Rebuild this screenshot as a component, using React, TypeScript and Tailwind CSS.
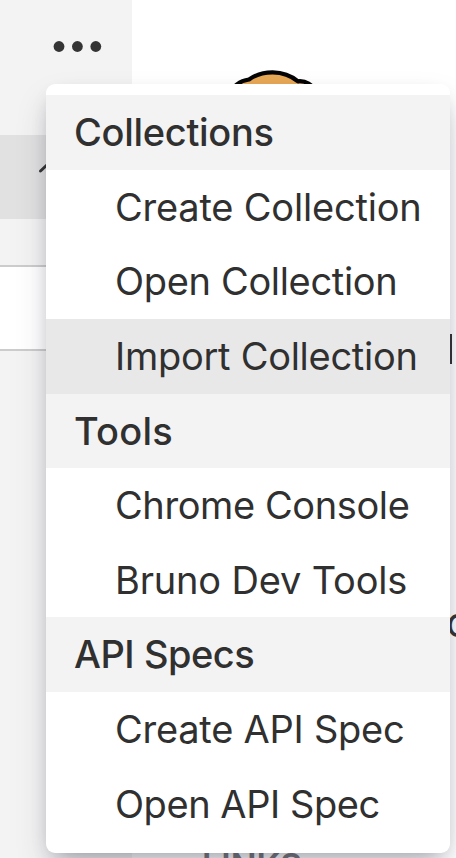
type Row = { label: string; tracking: string };
type Group = { title: Row; items: Row[] };

const groups: Group[] = [
  {
    title: { label: "Collections", tracking: "tracking-[-0.3px]" },
    items: [
      { label: "Create Collection", tracking: "tracking-[-0.2px]" },
      { label: "Open Collection", tracking: "tracking-[-0.33px]" },
      { label: "Import Collection", tracking: "tracking-[-0.27px]" },
    ],
  },
  {
    title: { label: "Tools", tracking: "tracking-[0.25px]" },
    items: [
      { label: "Chrome Console", tracking: "tracking-[-0.4px]" },
      { label: "Bruno Dev Tools", tracking: "tracking-[-0.18px]" },
    ],
  },
  {
    title: { label: "API Specs", tracking: "tracking-[-0.48px]" },
    items: [
      { label: "Create API Spec", tracking: "tracking-[-0.24px]" },
      { label: "Open API Spec", tracking: "tracking-[-0.45px]" },
    ],
  },
];

const active = "Import Collection";

function Sidebar() {
  return (
    <aside className="flex h-full w-[132px] shrink-0 flex-col bg-[#f3f3f3]">
      <div className="flex h-[135px] items-start justify-end pr-[30px] pt-10">
        <svg width="50" height="13" viewBox="0 0 50 13" fill="#343434">
          <circle cx="7" cy="6.5" r="5.4" />
          <circle cx="25.4" cy="6.5" r="5.4" />
          <circle cx="43.8" cy="6.5" r="5.4" />
        </svg>
      </div>
      <div className="flex h-[84px] items-start bg-[#e1e1e1] pl-[38px] pt-[19px]">
        <svg width="34" height="34" viewBox="0 0 34 34" fill="none" stroke="#343434" strokeWidth="3" strokeLinecap="round" strokeLinejoin="round">
          <path d="M2.5 17 17 3.5l14.5 13.5" />
        </svg>
      </div>
      <div className="mt-[46px] h-[86px] border-y-2 border-[#cccccc] bg-white" />
    </aside>
  );
}

function Main() {
  return (
    <main className="flex h-full min-w-0 flex-1 flex-col items-start overflow-hidden bg-white">
      <svg className="ml-[88px] mt-[68px] shrink-0" width="110" height="66" viewBox="0 0 110 66">
        <path
          d="M8 26C14 18 19 13 29 11.5C42 2.2 63 1 78 13.3C86 12.5 91 16 99 26V58H8Z"
          fill="#e8a956"
          stroke="#050505"
          strokeWidth="4.2"
          strokeLinejoin="round"
        />
      </svg>
      <div className="ml-[317px] mt-[200px] h-[30px] w-[3px] shrink-0 bg-[#343434]" />
      <div className="ml-[314px] mt-[235px] h-[46px] shrink-0 text-[41px] leading-[46px] text-[#343434]">c</div>
      <div className="ml-[70px] mt-[201px] h-[40px] shrink-0 text-[34px] font-semibold leading-[40px] text-[#77777b]">LINKS</div>
    </main>
  );
}

export default function App() {
  return (
    <div className="relative flex h-[858px] w-[456px] overflow-hidden font-['Inter','Liberation_Sans',sans-serif]">
      <Sidebar />
      <Main />
      <div className="absolute left-[46px] top-[84px] h-[769px] w-[404px] overflow-hidden rounded-[9px] bg-white py-[11px] text-[38px] text-[#303030] shadow-[0_17px_34px_-6px_rgba(50,50,93,0.25),0_9px_20px_-9px_rgba(0,0,0,0.3)]">
        {groups.map(({ title, items }) => (
          <section key={title.label}>
            <h2 className={`h-[74.65px] bg-[#f3f3f3] pl-[28px] font-medium leading-[74px] ${title.tracking}`}>{title.label}</h2>
            {items.map(({ label, tracking }) => (
              <div
                key={label}
                className={`h-[74.65px] whitespace-nowrap pl-[69px] leading-[74px] ${tracking} ${label === active ? "bg-[#e8e8e8]" : "bg-white"}`}
              >
                {label}
              </div>
            ))}
          </section>
        ))}
      </div>
    </div>
  );
}
